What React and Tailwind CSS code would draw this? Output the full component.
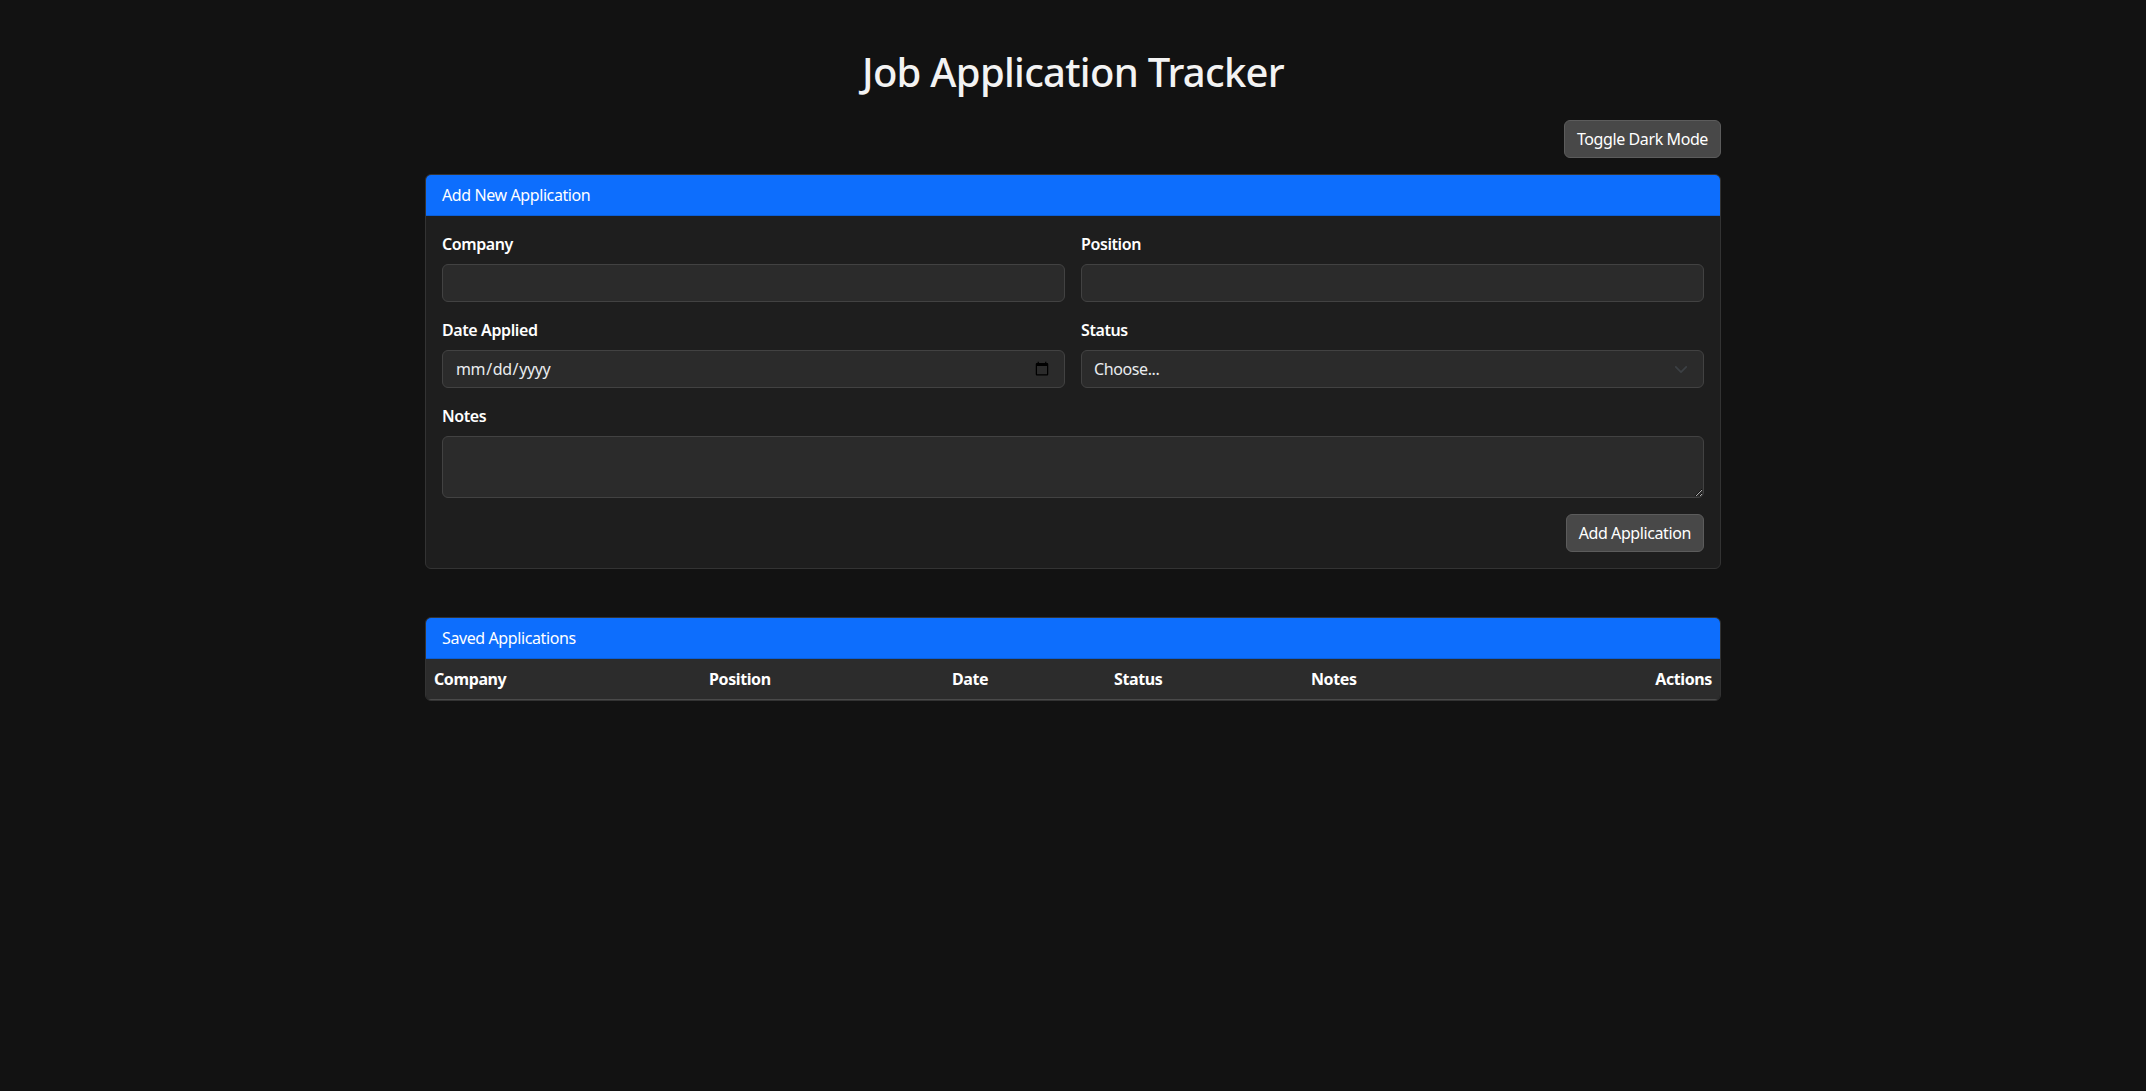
import React from "react";

function Label({ children }) {
  return <label className="mb-2 block text-[16px] font-semibold leading-6 text-white">{children}</label>;
}

const inputCls =
  "block h-[38px] w-full rounded-md border border-[#424242] bg-[#2b2b2b] px-3 text-[16px] leading-6 tracking-[-0.025em] text-[#e9ecef] outline-none";

export default function App() {
  return (
    <div
      className="min-h-screen bg-[#121212] tracking-[-0.025em] text-[#dee2e6]"
      style={{ fontFamily: '"Noto Sans", "Open Sans", sans-serif' }}
    >
      <div className="mx-auto max-w-[1320px] px-3 pt-12">
        <h1 className="mb-6 text-center text-[40px] font-medium leading-[48px] tracking-[-0.018em] text-[#f3f3f3]">
          Job Application Tracker
        </h1>
        <div className="mb-4 flex justify-end">
          <button className="h-[38px] rounded-md border border-[#5c5c5c] bg-[#484848] px-3 text-[16px] leading-6 tracking-[-0.025em] text-white">
            Toggle Dark Mode
          </button>
        </div>

        <div className="overflow-hidden rounded-md border border-[#333333] bg-[#1e1e1e]">
          <div className="border-b border-[#0b5fd9] bg-[#0d6efd] px-4 py-2 text-[16px] leading-6 text-white">
            Add New Application
          </div>
          <div className="p-4">
            <div className="grid grid-cols-2 gap-x-4 gap-y-4">
              <div>
                <Label>Company</Label>
                <input type="text" className={inputCls} />
              </div>
              <div>
                <Label>Position</Label>
                <input type="text" className={inputCls} />
              </div>
              <div>
                <Label>Date Applied</Label>
                <input type="date" className={inputCls} />
              </div>
              <div>
                <Label>Status</Label>
                <div className="relative">
                  <select className={inputCls + " appearance-none pr-9"} defaultValue="">
                    <option value="">Choose...</option>
                    <option>Applied</option>
                    <option>Interview</option>
                    <option>Offer</option>
                    <option>Rejected</option>
                  </select>
                  <svg
                    className="pointer-events-none absolute right-[16px] top-[15px]"
                    width="14"
                    height="9"
                    viewBox="0 0 16 10"
                    fill="none"
                  >
                    <path d="M2 2l6 6 6-6" stroke="#3c4044" strokeWidth="2" strokeLinecap="round" strokeLinejoin="round" />
                  </svg>
                </div>
              </div>
              <div className="col-span-2">
                <Label>Notes</Label>
                <textarea
                  rows={2}
                  className="block h-[62px] w-full rounded-md border border-[#424242] bg-[#2b2b2b] px-3 py-[6px] text-[16px] leading-6 text-[#e9ecef] outline-none"
                />
              </div>
            </div>
            <div className="mt-4 flex justify-end">
              <button className="h-[38px] rounded-md border border-[#5c5c5c] bg-[#484848] px-3 text-[16px] leading-6 tracking-[-0.025em] text-white">
                Add Application
              </button>
            </div>
          </div>
        </div>

        <div className="mt-12 overflow-hidden rounded-md border border-[#333333] bg-[#1e1e1e]">
          <div className="border-b border-[#0b5fd9] bg-[#0d6efd] px-4 py-2 text-[16px] leading-6 text-white">
            Saved Applications
          </div>
          <table className="w-full table-fixed border-collapse">
            <thead>
              <tr className="border-b border-[#4a4a4a] bg-[#2c2c2c] text-left text-[16px] font-bold leading-6 text-white">
                <th className="w-[275px] px-2 py-2 font-bold">Company</th>
                <th className="w-[243px] px-2 py-2 font-bold">Position</th>
                <th className="w-[162px] px-2 py-2 font-bold">Date</th>
                <th className="w-[197px] px-2 py-2 font-bold">Status</th>
                <th className="w-[190px] px-2 py-2 font-bold">Notes</th>
                <th className="px-2 py-2 text-right font-bold">Actions</th>
              </tr>
            </thead>
            <tbody></tbody>
          </table>
        </div>
      </div>
    </div>
  );
}
